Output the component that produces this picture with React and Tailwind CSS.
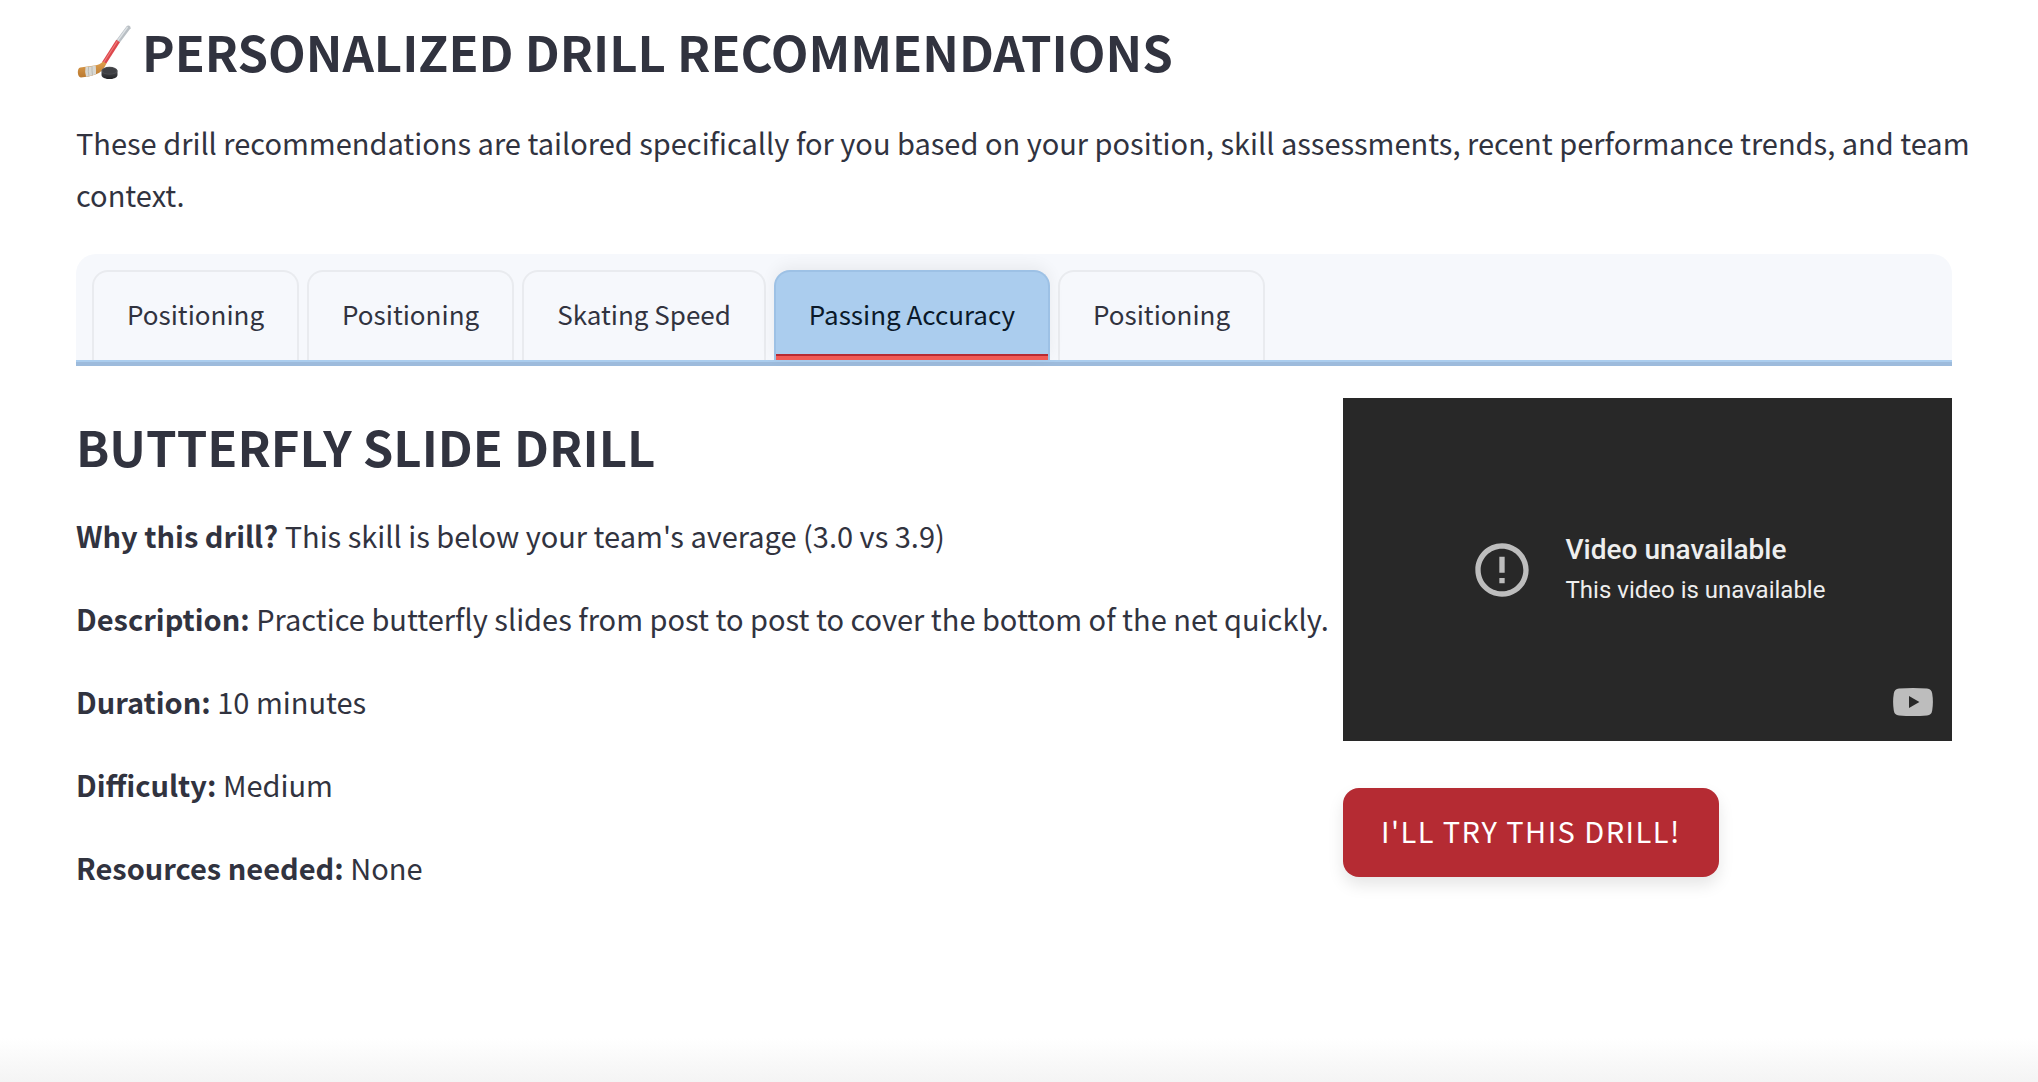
import { useState } from "react";

const tabs = ["Positioning", "Positioning", "Skating Speed", "Passing Accuracy", "Positioning"];

const details = [
  ["Why this drill?", "This skill is below your team's average (3.0 vs 3.9)"],
  ["Description:", "Practice butterfly slides from post to post to cover the bottom of the net quickly."],
  ["Duration:", "10 minutes"],
  ["Difficulty:", "Medium"],
  ["Resources needed:", "None"],
];

function HockeyIcon() {
  return (
    <svg viewBox="0 0 56 56" className="size-14 shrink-0" aria-hidden="true">
      <defs>
        <linearGradient id="wood" x1="0" y1="0" x2="0" y2="1">
          <stop offset="0" stopColor="#e0a04e" />
          <stop offset="1" stopColor="#b9782f" />
        </linearGradient>
        <linearGradient id="puck" x1="0" y1="0" x2="0" y2="1">
          <stop offset="0" stopColor="#4a4b4f" />
          <stop offset="1" stopColor="#222326" />
        </linearGradient>
      </defs>
      <path d="M40 17.500 50.800 3q1.200-1 2.600-.2t1.200 2.400L43.500 20z" fill="#b9bfc4" />
      <path d="M51.600 4 41.800 17.500" stroke="#dde2e5" strokeWidth="1.300" />
      <path d="m40.300 16.800 3.600 2.400L30 41l-4.200-1.500z" fill="#dd474c" />
      <path d="M41.300 18.300 27.800 39.300" stroke="#f07d7d" strokeWidth="1.100" fill="none" />
      <path d="m27 38.500 3.400 2c-2.600 5.500-5.400 9-10.400 10.800-5 1.700-10 2.900-15 3.200-3.700.2-4.400-9.200-.7-9.900 4.700-.8 9.700-1.100 14.200-2 3.500-.7 6.300-1.600 8.500-4.100z" fill="url(#wood)" />
      <path d="M9.500 43.900c3.500-.3 7-.8 10.200-1.500q.6 4.500.3 8.900-5 1.600-9.900 2.500-1.600-5-.6-9.900z" fill="#d9d8d2" />
      <path d="M12.600 43.600q-.8 4.700.4 9.600M16 43.200q-.2 4.700.5 9" stroke="#b3b3ad" strokeWidth=".8" fill="none" />
      <path d="M25.500 47.500v4.200c0 5.800 16 5.800 16 0v-4.200z" fill="url(#puck)" />
      <ellipse cx="33.500" cy="47.700" rx="8" ry="3.900" fill="#515256" />
      <ellipse cx="33.500" cy="47.700" rx="7" ry="3.100" fill="#3f4044" />
    </svg>
  );
}

function VideoPanel() {
  return (
    <section aria-label="Drill video" className="relative flex aspect-[609/343] w-full items-center justify-center bg-[#282828] font-['Roboto',sans-serif]">
      <div className="flex items-center gap-8">
        <svg viewBox="0 0 24 24" className="size-16 shrink-0" fill="#bdbdbd" aria-hidden="true">
          <path d="M11 15h2v2h-2zm0-8h2v6h-2zm.99-5C6.470 2 2 6.480 2 12s4.470 10 9.990 10C17.520 22 22 17.520 22 12S17.520 2 11.990 2zM12 20c-4.420 0-8-3.580-8-8s3.580-8 8-8 8 3.580 8 8-3.580 8-8 8z" />
        </svg>
        <div className="text-[#eeeeee]">
          <p className="text-[28px] leading-10 font-medium">Video unavailable</p>
          <p className="text-2xl leading-10">This video is unavailable</p>
        </div>
      </div>
      <a href="#youtube" aria-label="Watch on YouTube" className="absolute right-[19px] bottom-[25px]">
        <svg viewBox="0 0 40 28" className="h-7 w-10" aria-hidden="true">
          <path d="M6 .6Q20-.6 34 .6q4.600.5 5.200 5 1.400 8.400 0 16.800-.6 4.500-5.200 5-14 1.200-28 0-4.600-.5-5.200-5-1.400-8.400 0-16.800Q1.400 1.100 6 .6z" fill="#bdbdbd" />
          <path d="M16 8v12l10.400-6z" fill="#282828" />
        </svg>
      </a>
    </section>
  );
}

export default function App() {
  const [active, setActive] = useState(3);
  return (
    <div className="flex min-h-screen flex-col bg-white font-['Noto_Sans_CJK_SC',sans-serif] text-[#31333f]">
      <main className="grow pr-[86px] pl-[76px]">
        <h1 className="flex items-center gap-2.5 pt-[21px] text-[49px] leading-[60px] font-bold">
          <HockeyIcon />
          <span>PERSONALIZED DRILL RECOMMENDATIONS</span>
        </h1>
        <p className="-mr-6 mt-[35px] text-[29px] leading-[52px]">
          These drill recommendations are tailored specifically for you based on your position, skill assessments,
          recent performance trends, and team context.
        </p>
        <div className="mt-[34px] border-b-4 border-[#9dbbdc]">
          <div role="tablist" className="flex gap-2 rounded-t-[20px] border-b-2 border-[#abcdee] bg-[#f6f8fc] px-4 pt-4">
            {tabs.map((label, i) => (
              <button
                key={i}
                type="button"
                role="tab"
                aria-selected={i === active}
                onClick={() => setActive(i)}
                className={
                  i === active
                    ? "relative h-[90px] rounded-t-2xl border-2 border-b-0 border-[#9dc1e5] bg-[#abcdee] px-[33px] pb-1.5 text-[26px] text-[#0a1929] shadow-[0_-4px_16px_rgba(0,0,0,0.06)]"
                    : "h-[90px] rounded-t-2xl border-2 border-b-0 border-[#e9ebef] px-[33px] pb-1.5 text-[26px]"
                }
              >
                {label}
                {i === active && (
                  <span className="absolute inset-x-0 bottom-0 h-1.5 border-t-2 border-[#b72b33] bg-[#f05a55]" />
                )}
              </button>
            ))}
          </div>
        </div>
        <div className="mt-8 grid grid-cols-[1259fr_609fr] gap-2">
          <div>
            <h2 className="pt-[18px] text-[49px] leading-[60px] font-bold">BUTTERFLY SLIDE DRILL</h2>
            <div className="mt-[34px] flex flex-col gap-8 text-[29px] leading-[51px]">
              {details.map(([term, text]) => (
                <p key={term}>
                  <strong className="font-bold">{term}</strong> {text}
                </p>
              ))}
            </div>
          </div>
          <div>
            <VideoPanel />
            <button
              type="button"
              className="mt-[47px] h-[89px] rounded-2xl bg-[#b52b33] px-[38px] pb-1 text-[29px] tracking-wider text-white shadow-[0_8px_16px_rgba(0,0,0,0.1)]"
            >
              I'LL TRY THIS DRILL!
            </button>
          </div>
        </div>
      </main>
      <div className="h-11 bg-linear-to-b from-white to-[#f4f4f4]" />
    </div>
  );
}
